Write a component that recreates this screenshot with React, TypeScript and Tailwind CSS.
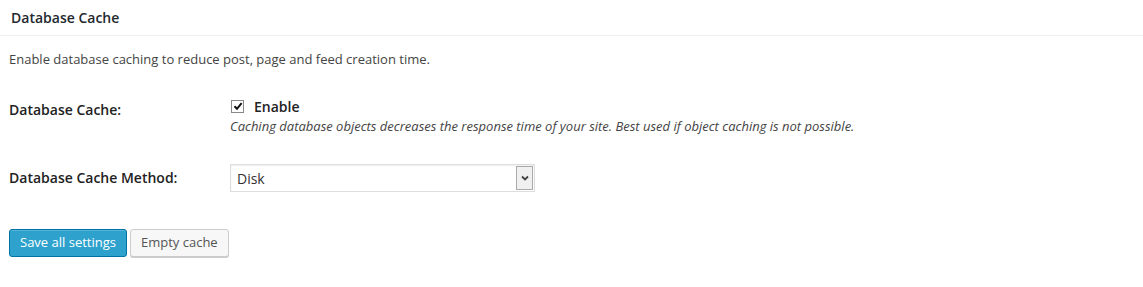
import React from "react";

export default function App() {
  return (
    <div
      className="w-[1143px] h-[287px] bg-white text-[#222]"
      style={{ fontFamily: '"Open Sans", sans-serif' }}
    >
      <div className="h-[36px] border-b border-[#eeeeee] flex items-center pl-[11px]">
        <h3 className="text-[14px] font-semibold text-[#23282d] leading-none mt-[1px]">Database Cache</h3>
      </div>
      <p className="mt-[14px] ml-[9px] text-[13px] leading-[18px] text-[#444]">
        Enable database caching to reduce post, page and feed creation time.
      </p>
      <div className="mt-[28px] flex">
        <div className="w-[230px] pl-[9px] pt-[5px] text-[14px] font-semibold leading-[18px] text-[#222]">
          Database Cache:
        </div>
        <div className="flex flex-col">
          <label className="flex items-center h-[20px] pl-[1px]">
            <span className="w-[13px] h-[13px] border border-[#888] bg-white flex items-center justify-center">
              <svg width="10" height="10" viewBox="0 0 10 10">
                <path d="M1.5 5.2 L4 7.8 L8.6 2.2" stroke="#111" strokeWidth="2" fill="none" />
              </svg>
            </span>
            <span className="ml-[10px] text-[14px] font-semibold text-[#222]">Enable</span>
          </label>
          <span className="text-[13px] italic leading-[16px] text-[#444] mt-[2px]">
            Caching database objects decreases the response time of your site. Best used if object caching is not possible.
          </span>
        </div>
      </div>
      <div className="mt-[30px] flex items-center">
        <div className="w-[230px] pl-[9px] text-[14px] font-semibold leading-[18px]">
          Database Cache Method:
        </div>
        <div className="w-[305px] h-[28px] border border-[#dddddd] bg-white flex items-center justify-between shadow-[inset_0_1px_2px_rgba(0,0,0,0.07)]">
          <span className="pl-[6px] text-[14px] text-[#333]">Disk</span>
          <span className="w-[17px] h-[24px] mr-[1px] border border-[#aaa] bg-[#f0f0f0] flex items-center justify-center">
            <svg width="8" height="6" viewBox="0 0 8 6">
              <path d="M1 1.5 L4 4.5 L7 1.5" stroke="#444" strokeWidth="1.8" fill="none" />
            </svg>
          </span>
        </div>
      </div>
      <div className="mt-[37px] ml-[9px] flex gap-[3px]">
        <button className="h-[28px] px-[10px] rounded-[3px] bg-[#2ea2cc] border border-[#0074a2] text-white text-[13px] shadow-[inset_0_1px_0_rgba(120,200,230,0.5)]">
          Save all settings
        </button>
        <button className="h-[28px] px-[10px] rounded-[3px] bg-[#f7f7f7] border border-[#cccccc] text-[#555] text-[13px] shadow-[0_1px_0_#cccccc]">
          Empty cache
        </button>
      </div>
    </div>
  );
}
